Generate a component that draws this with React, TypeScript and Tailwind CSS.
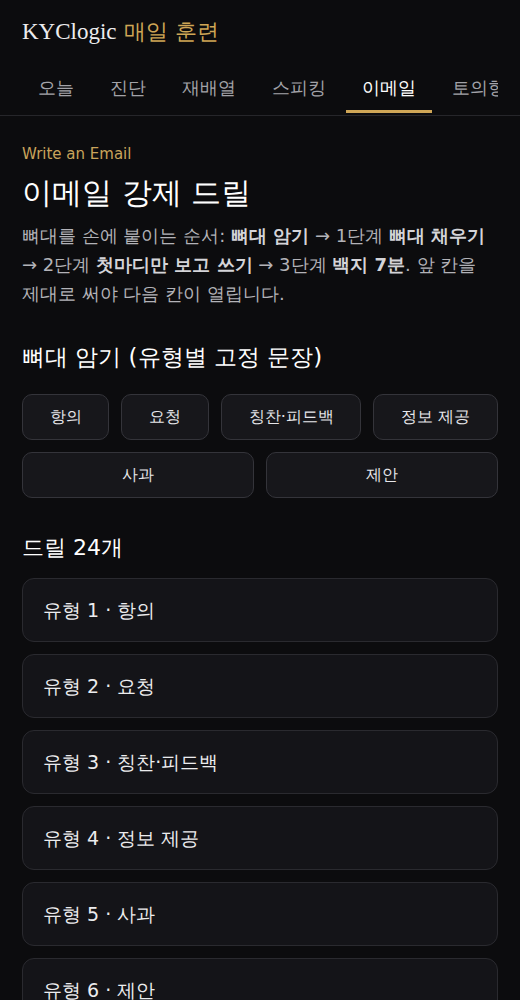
import React from "react";

const tabs = ["오늘", "진단", "재배열", "스피킹", "이메일", "토의형"];
const types = ["항의", "요청", "칭찬·피드백", "정보 제공", "사과", "제안"];

export default function App() {
  return (
    <div className="min-h-[1000px] bg-[#0c0c0e] text-[#ececee] font-['DejaVu_Sans',sans-serif]">
      <header className="px-[22px] pt-[16px]">
        <div className="text-[22px] leading-[32px]">
          <span className="font-['Liberation_Serif',serif] text-[23px]">KYClogic</span>{" "}
          <span className="text-[#cfa656]">매일 훈련</span>
        </div>
      </header>
      <nav className="mt-[14px] border-b border-[#26262a] pb-[2px] px-[22px]">
        <div className="flex gap-[4px] whitespace-nowrap overflow-hidden">
          {tabs.map((t) => (
            <div
              key={t}
              className={
                "shrink-0 px-4 pt-[13px] pb-[9px] text-[18px] leading-[26px] border-b-[3px] " +
                (t === "이메일"
                  ? "text-white border-[#cfa656]"
                  : "text-[#a3a3a8] border-transparent")
              }
            >
              {t}
            </div>
          ))}
        </div>
      </nav>
      <main className="px-[22px] pt-[24px]">
        <div className="text-[15px] leading-[28px] text-[#c9a45c]">Write an Email</div>
        <h1 className="mt-[5px] text-[30px] leading-[40px] text-white">이메일 강제 드릴</h1>
        <p className="mt-[8px] text-[18px] leading-[29px] text-[#b3b3b8]">
          뼈대를 손에 붙이는 순서: <b className="text-[#d4d4d8]">뼈대 암기</b> → 1단계{" "}
          <b className="text-[#d4d4d8]">뼈대 채우기</b> → 2단계{" "}
          <b className="text-[#d4d4d8]">첫마디만 보고 쓰기</b> → 3단계{" "}
          <b className="text-[#d4d4d8]">백지 7분</b>. 앞 칸을 제대로 써야 다음 칸이 열립니다.
        </p>
        <h2 className="mt-[33px] text-[23px] leading-[32px] text-white">뼈대 암기 (유형별 고정 문장)</h2>
        <div className="mt-[21px] flex flex-wrap gap-[12px]">
          {types.map((t) => (
            <div
              key={t}
              className="flex-auto h-[46px] flex items-center justify-center px-5 rounded-[10px] border border-[#34343a] bg-[#17171b] text-[16px] text-[#e6e6ea]"
            >
              {t}
            </div>
          ))}
        </div>
        <h2 className="mt-[34px] text-[22px] leading-[32px] text-white">드릴 24개</h2>
        <div className="mt-[14px] flex flex-col gap-[12px]">
          {types.map((t, i) => (
            <div
              key={t}
              className="h-[64px] shrink-0 flex items-center px-[20px] rounded-[12px] border border-[#2a2a2f] bg-[#141418] text-[19px] text-[#ececee]"
            >
              유형 {i + 1} · {t}
            </div>
          ))}
        </div>
      </main>
    </div>
  );
}
